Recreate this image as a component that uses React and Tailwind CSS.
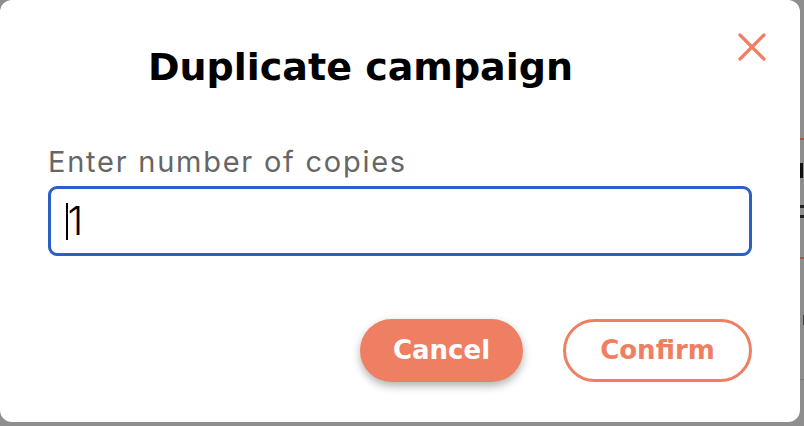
const ORANGE = '#EE7F63';

function CloseIcon() {
  return (
    <svg width="28" height="28" viewBox="0 0 28 28" fill="none" stroke={ORANGE} strokeWidth="3.2" strokeLinecap="round">
      <line x1="2" y1="2" x2="26" y2="26" />
      <line x1="26" y1="2" x2="2" y2="26" />
    </svg>
  );
}

function PageEdge() {
  // sliver of the page behind the dim overlay
  return (
    <div className="flex w-[4px] flex-col">
      <div className="h-[138px]" />
      <div className="h-[2px] bg-[#9b5a49]" />
      <div className="mt-[23px] h-[15px] w-[3px] bg-[#111]" />
      <div className="mt-[27px] h-[3px] w-[4px] bg-[#222]" />
      <div className="mt-[7px] h-[3px] w-[4px] bg-[#222]" />
      <div className="mt-[39px] h-[2px] bg-[#9b5a49]" />
      <div className="ml-[3px] mt-[56px] h-[10px] w-[1px] bg-[#3a3a3a]" />
      <div className="mt-[54px] h-[1px] bg-[#7a7a7a]" />
    </div>
  );
}

export default function App() {
  return (
    <div className="flex h-[426px] w-[804px] overflow-hidden bg-[#8e8e8e]">
      <div className="flex h-[422px] w-[800px] flex-col rounded-[12px] bg-white">
        <div className="flex items-start pl-[48px] pr-[34px] pt-[33px]">
          <h2
            className="mt-[12px] flex-1 text-center text-[38px] font-bold leading-[44px] text-black"
            style={{ fontFamily: '"DejaVu Sans", sans-serif' }}
          >
            Duplicate campaign
          </h2>
          <button className="ml-[65px] flex h-[28px] w-[28px] items-center justify-center">
            <CloseIcon />
          </button>
        </div>

        <div className="mt-[55px] px-[48px]" style={{ fontFamily: 'Inter, sans-serif' }}>
          <label className="block text-[29px] leading-[36px] tracking-[1.75px] text-[#666]">Enter number of copies</label>
          <div className="mt-[6px] flex h-[70px] items-center rounded-[9px] border-[3px] border-[#2a5fc5] pl-[15px]">
            <span className="h-[37px] w-[1.5px] bg-black" />
            <span className="text-[40px] font-light leading-[40px] text-black">1</span>
          </div>
        </div>

        <div
          className="mt-[63px] flex justify-end gap-[40px] px-[48px]"
          style={{ fontFamily: '"DejaVu Sans", sans-serif' }}
        >
          <button
            className="h-[63px] w-[163px] rounded-full text-[26px] font-bold text-white shadow-[0_4px_8px_rgba(0,0,0,0.3)]"
            style={{ backgroundColor: ORANGE }}
          >
            Cancel
          </button>
          <button
            className="h-[63px] w-[189px] rounded-full border-[3px] bg-white text-[26px] font-bold"
            style={{ borderColor: ORANGE, color: ORANGE }}
          >
            Confirm
          </button>
        </div>
      </div>
      <PageEdge />
    </div>
  );
}
